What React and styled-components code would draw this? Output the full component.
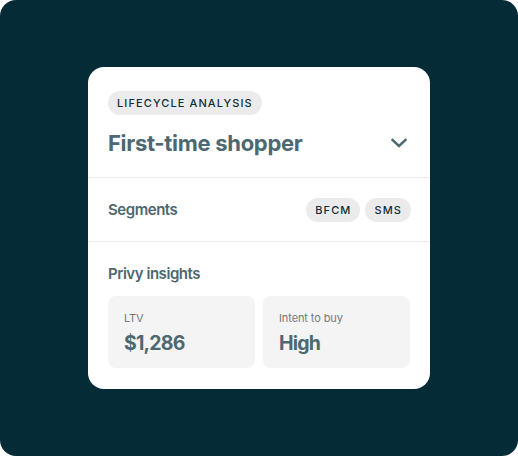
import React from "react";
import styled, { createGlobalStyle } from "styled-components";

const Global = createGlobalStyle`
  html, body { margin: 0; padding: 0; background: #ffffff; }
  body { font-family: Inter, "Noto Sans", sans-serif; -webkit-font-smoothing: antialiased; }
`;

const Stage = styled.div`
  width: 518px;
  height: 456px;
  border-radius: 16px;
  background: #052c36;
  display: flex;
  align-items: center;
  justify-content: center;
`;

const Card = styled.div`
  width: 342px;
  background: #ffffff;
  border-radius: 16px;
  display: flex;
  flex-direction: column;
`;

const Section = styled.div`
  padding: ${(p) => p.$pad};
  border-top: ${(p) => (p.$divider ? "1px solid #ebebeb" : "none")};
  display: flex;
  flex-direction: ${(p) => p.$dir || "column"};
  align-items: ${(p) => p.$align || "stretch"};
  justify-content: ${(p) => p.$justify || "flex-start"};
  gap: ${(p) => p.$gap || "0px"};
`;

const Tag = styled.span`
  display: inline-flex;
  align-items: center;
  align-self: ${(p) => (p.$start ? "flex-start" : "auto")};
  height: 24px;
  padding: 0 9px;
  border-radius: 12px;
  background: #ebebeb;
  color: #0f2e37;
  font-size: 11px;
  font-weight: 500;
  letter-spacing: 1.1px;
  text-transform: uppercase;
`;

const TitleRow = styled.div`
  display: flex;
  align-items: center;
  justify-content: space-between;
  margin-top: 14px;
`;

const Title = styled.h1`
  margin: 0;
  font-size: 22px;
  line-height: 28px;
  font-weight: 700;
  color: #4d6870;
  letter-spacing: -0.3px;
`;

const Label = styled.span`
  font-size: 15px;
  line-height: 20px;
  font-weight: 600;
  color: #4d6870;
  letter-spacing: -0.45px;
`;

const Pills = styled.div`
  display: flex;
  gap: 5px;
`;

const Grid = styled.div`
  display: grid;
  grid-template-columns: 1fr 1fr;
  gap: 8px;
`;

const Stat = styled.div`
  background: #f4f4f4;
  border-radius: 8px;
  padding: 14px 16px 11px;
  display: flex;
  flex-direction: column;
  gap: 4px;
`;

const StatLabel = styled.span`
  font-size: 11px;
  line-height: 16px;
  color: #75797b;
  letter-spacing: -0.1px;
`;

const StatValue = styled.span`
  font-size: 19.5px;
  line-height: 27px;
  font-weight: 700;
  color: #4d6870;
  letter-spacing: -0.8px;
`;

const Chevron = () => (
  <svg width="18" height="12" viewBox="0 0 18 12" style={{ marginRight: 2 }}>
    <path d="M2.5 3 L9 9 L15.5 3" fill="none" stroke="#4d6870" strokeWidth="2.4" strokeLinecap="square" />
  </svg>
);

export default function App() {
  return (
    <>
      <Global />
      <Stage>
        <Card>
          <Section $pad="24px 20px 20px">
            <Tag $start>Lifecycle analysis</Tag>
            <TitleRow>
              <Title>First-time shopper</Title>
              <Chevron />
            </TitleRow>
          </Section>
          <Section $divider $pad="20px 19px 19px 20px" $dir="row" $align="center" $justify="space-between">
            <Label>Segments</Label>
            <Pills>
              <Tag>BFCM</Tag>
              <Tag>SMS</Tag>
            </Pills>
          </Section>
          <Section $divider $pad="22px 20px 21px" $gap="12px">
            <Label>Privy insights</Label>
            <Grid>
              <Stat>
                <StatLabel>LTV</StatLabel>
                <StatValue>$1,286</StatValue>
              </Stat>
              <Stat>
                <StatLabel>Intent to buy</StatLabel>
                <StatValue>High</StatValue>
              </Stat>
            </Grid>
          </Section>
        </Card>
      </Stage>
    </>
  );
}
